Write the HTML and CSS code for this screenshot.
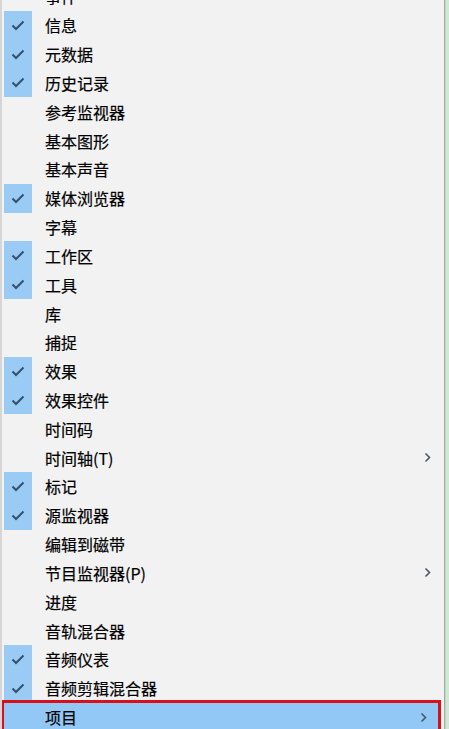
FILE: index.html
```html
<!DOCTYPE html>
<html lang="zh-CN">
<head>
    <meta charset="UTF-8">
    <meta name="viewport" content="width=device-width, initial-scale=1.0">
    <title>窗口菜单</title>
    <link rel="stylesheet" href="styles.css">
</head>
<body>
    <div class="frame">
        <div class="menu">
            <ul class="menu-list">
                <li class="item"><span class="check"></span><span class="label">事件</span></li>
                <li class="item on"><span class="check"></span><span class="label">信息</span></li>
                <li class="item on"><span class="check"></span><span class="label">元数据</span></li>
                <li class="item on"><span class="check"></span><span class="label">历史记录</span></li>
                <li class="item"><span class="check"></span><span class="label">参考监视器</span></li>
                <li class="item"><span class="check"></span><span class="label">基本图形</span></li>
                <li class="item"><span class="check"></span><span class="label">基本声音</span></li>
                <li class="item on"><span class="check"></span><span class="label">媒体浏览器</span></li>
                <li class="item"><span class="check"></span><span class="label">字幕</span></li>
                <li class="item on"><span class="check"></span><span class="label">工作区</span></li>
                <li class="item on"><span class="check"></span><span class="label">工具</span></li>
                <li class="item"><span class="check"></span><span class="label">库</span></li>
                <li class="item"><span class="check"></span><span class="label">捕捉</span></li>
                <li class="item on"><span class="check"></span><span class="label">效果</span></li>
                <li class="item on"><span class="check"></span><span class="label">效果控件</span></li>
                <li class="item"><span class="check"></span><span class="label">时间码</span></li>
                <li class="item sub"><span class="check"></span><span class="label">时间轴(T)</span></li>
                <li class="item on"><span class="check"></span><span class="label">标记</span></li>
                <li class="item on"><span class="check"></span><span class="label">源监视器</span></li>
                <li class="item"><span class="check"></span><span class="label">编辑到磁带</span></li>
                <li class="item sub"><span class="check"></span><span class="label">节目监视器(P)</span></li>
                <li class="item"><span class="check"></span><span class="label">进度</span></li>
                <li class="item"><span class="check"></span><span class="label">音轨混合器</span></li>
                <li class="item on"><span class="check"></span><span class="label">音频仪表</span></li>
                <li class="item on"><span class="check"></span><span class="label">音频剪辑混合器</span></li>
                <li class="item sub active"><span class="check"></span><span class="label">项目</span></li>
            </ul>
        </div>
        <div class="strip"></div>
    </div>

    <script>
        // checkmark and submenu arrow glyphs
        const tick = '<svg width="14" height="11" viewBox="0 0 14 11"><polyline points="1.5,5.5 5,9 12.5,1.5" fill="none" stroke="#34506f" stroke-width="2"/></svg>';
        const arrow = '<svg class="arrow" width="7" height="11" viewBox="0 0 7 11"><polyline points="1.5,1.5 5.5,5.5 1.5,9.5" fill="none" stroke="#4d5560" stroke-width="1.6"/></svg>';

        document.querySelectorAll('.item.on .check').forEach(el => el.innerHTML = tick);
        document.querySelectorAll('.item.sub').forEach(el => el.insertAdjacentHTML('beforeend', arrow));
    </script>
</body>
</html>
```

FILE: styles.css
```css
html, body { margin: 0; padding: 0; }
body { width: 449px; height: 729px; overflow: hidden; background: #f2f2f2; font-family: "Microsoft YaHei", "Noto Sans CJK SC", sans-serif; }
.frame { display: flex; height: 729px; }
.menu { width: 442px; background: #f2f2f2; border-left: 2px solid #d6d6d6; border-right: 1px solid #a9a9a9; overflow: hidden; }
.strip { flex: 1; background: #cfe9d5; border-left: 1px solid #b9dcc1; }
.menu-list { list-style: none; margin: -18px 0 0 0; padding: 0 2px 0 2px; }
.item { display: flex; align-items: center; height: 28.83px; font-size: 16px; color: #000; position: relative; }
.check { width: 28px; height: 100%; margin-right: 13px; display: flex; align-items: center; justify-content: center; flex-shrink: 0; }
.item.on .check { background: #99cbf4; }
.check svg { display: block; margin-left: -1px; }
.label { flex: 1; white-space: nowrap; line-height: 1; -webkit-text-stroke: 0.2px #000; }
.arrow { margin-right: 11px; }
.item.active { background: #91c8f6; outline: 3px solid #d9101a; width: 434px; }
```
